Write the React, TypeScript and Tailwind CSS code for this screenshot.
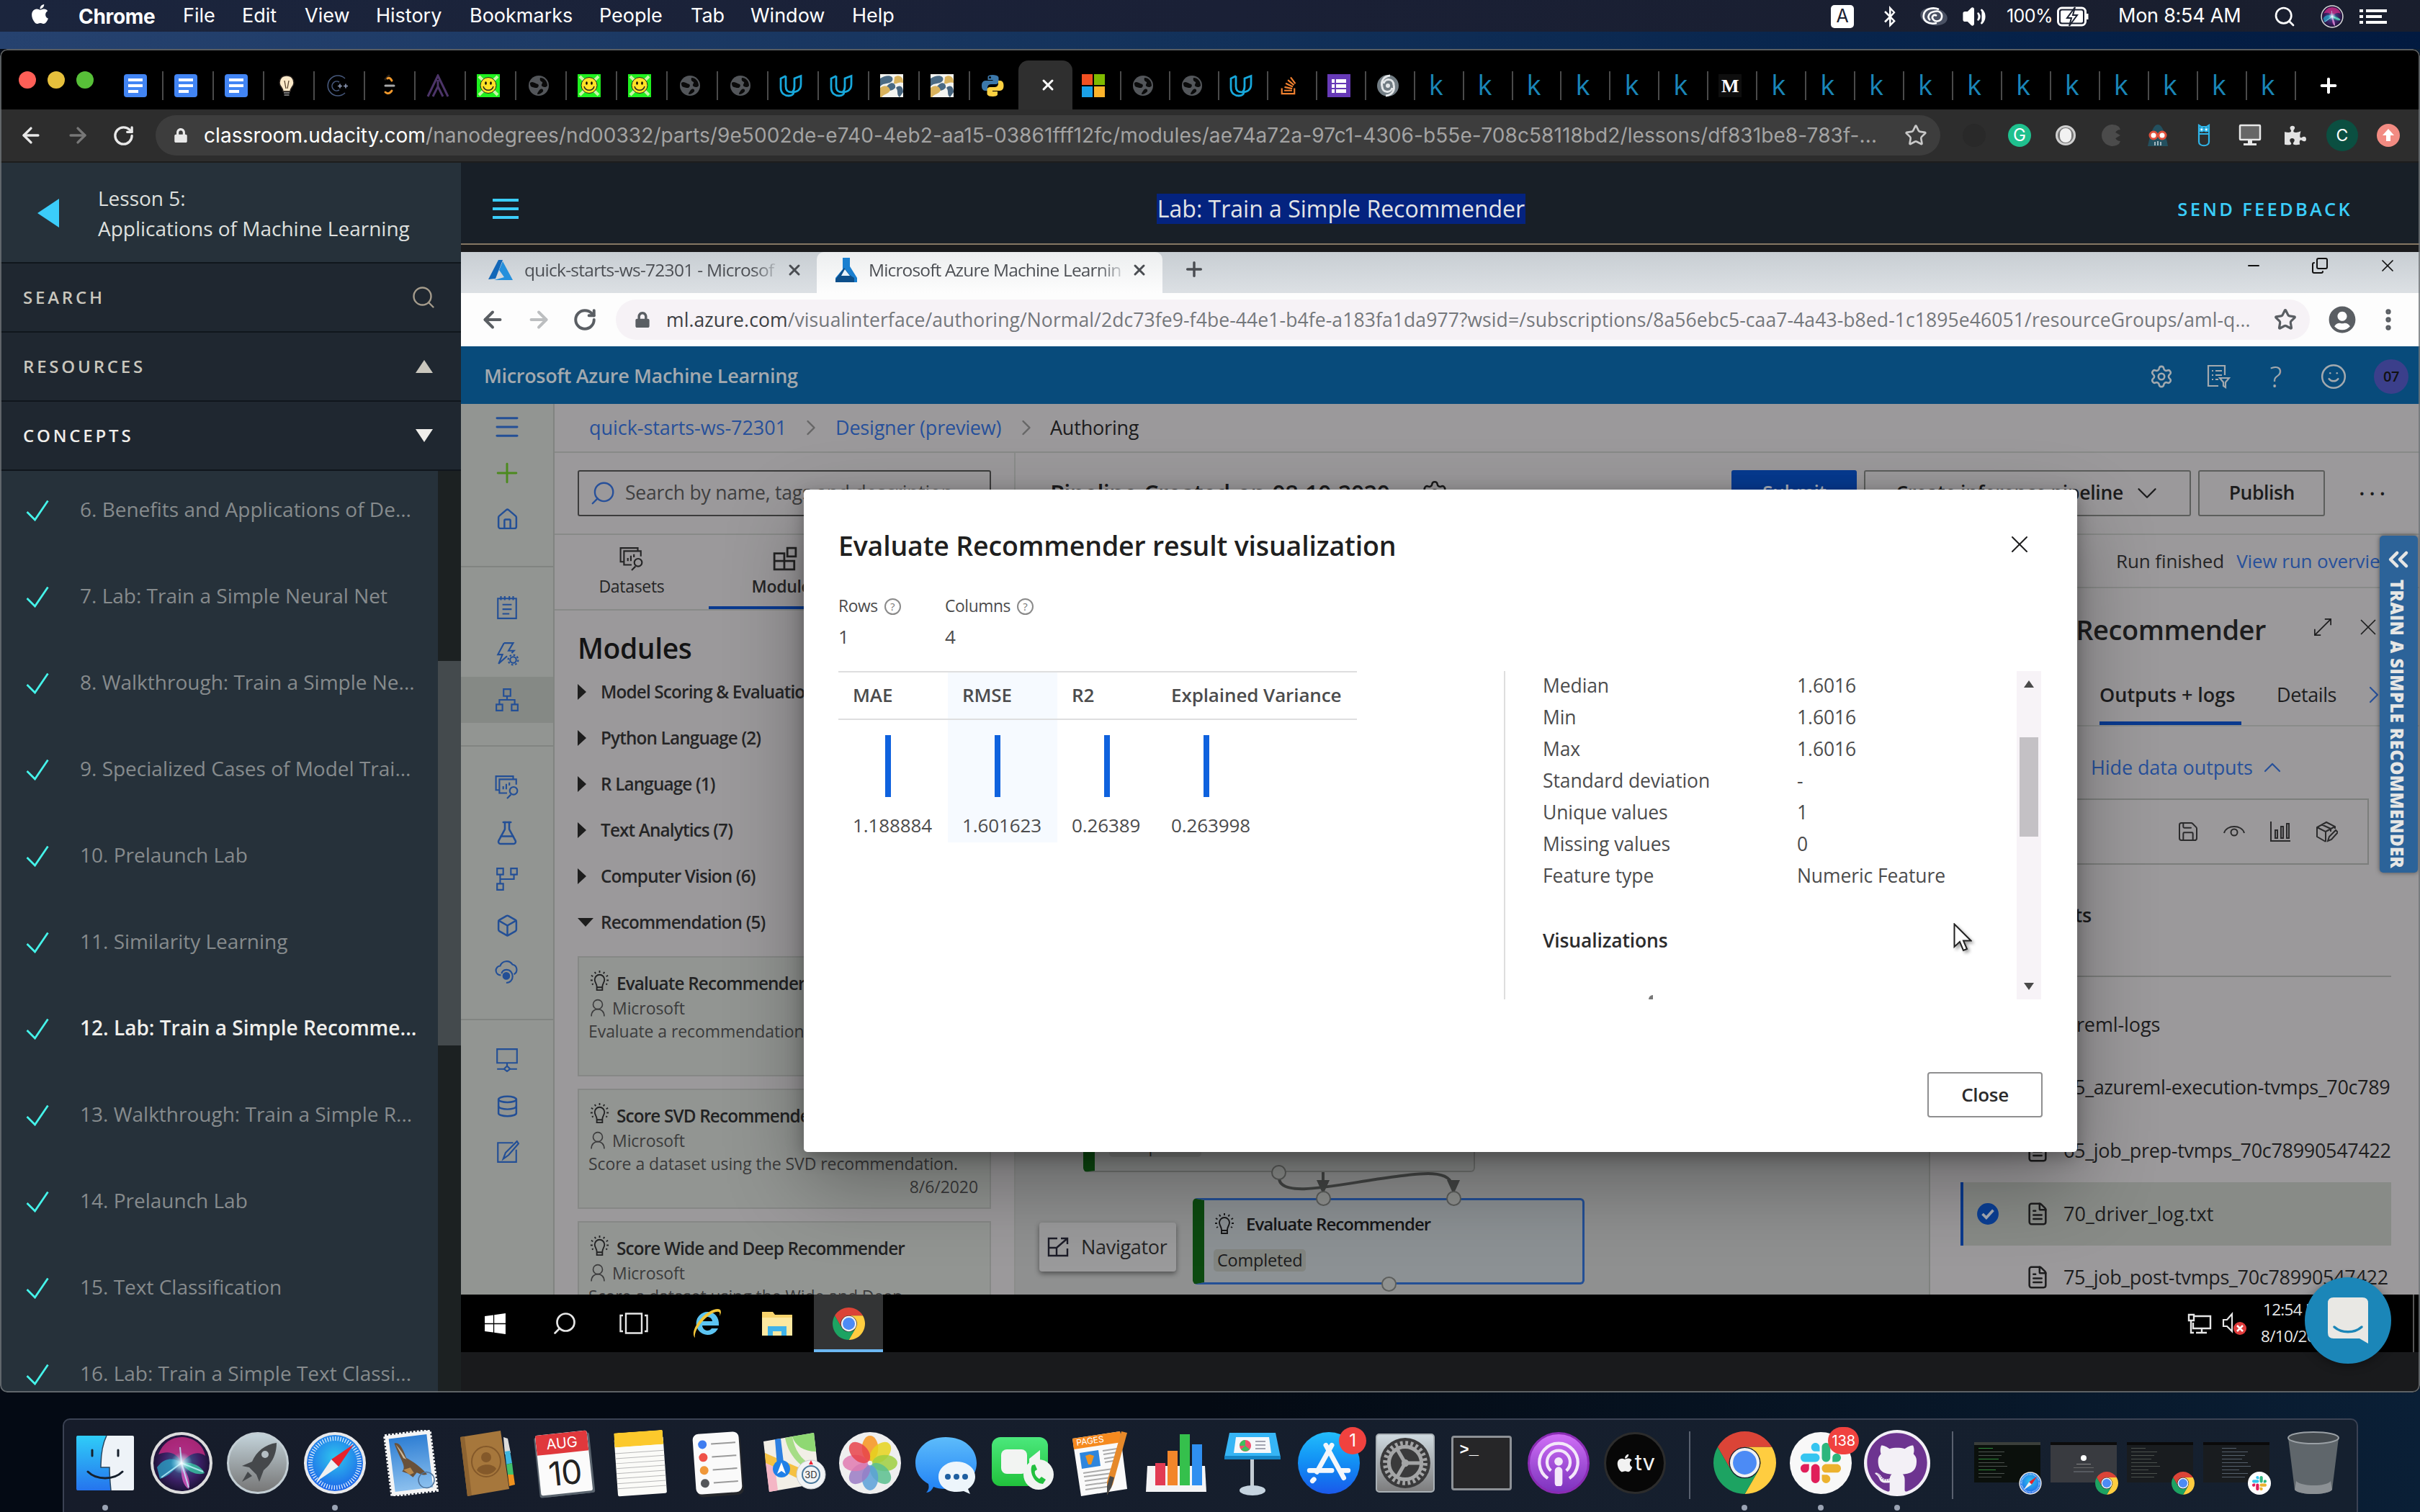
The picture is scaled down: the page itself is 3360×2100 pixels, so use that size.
import React from "react";
import { FaApple, FaBluetoothB, FaGithub, FaStackOverflow, FaLock, FaUserCircle, FaPuzzlePiece, FaWindows } from "react-icons/fa";
import {
  ArrowLeft, ArrowRight, RotateCw, Star, X, Plus, Search, Home, FlaskConical, Box, Database, Menu, ChevronRight, ChevronDown, ChevronUp,
  Settings, Smile, FileText, Save, ChevronsLeft, Copy, Volume2, MoreVertical, Minus,
} from "lucide-react";

type P = { className?: string };

/* ---------- brand marks ---------- */
const Chrome = ({ className = "" }: P) => (
  <svg viewBox="2 2 44 44" className={className}>
    <path fill="#DB4437" d="M24 13H43.05A22 22 0 0 0 4.95 13L14.47 29.5A11 11 0 0 1 24 13Z" />
    <path fill="#FFCD40" d="M43.05 13A22 22 0 0 1 24 46L33.53 29.5A11 11 0 0 0 24 13Z" />
    <path fill="#1DA362" d="M24 46A22 22 0 0 1 4.95 13L14.47 29.5A11 11 0 0 0 33.53 29.5Z" />
    <circle cx="24" cy="24" r="10.4" fill="#f1f1f1" />
    <circle cx="24" cy="24" r="8.3" fill="#4c8bf5" />
  </svg>
);
const SlackMark = ({ className = "" }: P) => (
  <svg viewBox="0 0 122.8 122.8" className={className}>
    <path fill="#E01E5A" d="M25.8 77.6c0 7.1-5.8 12.9-12.9 12.9S0 84.7 0 77.6s5.8-12.9 12.9-12.9h12.9v12.9zm6.5 0c0-7.1 5.8-12.9 12.9-12.9s12.9 5.8 12.9 12.9v32.3c0 7.1-5.8 12.9-12.9 12.9s-12.9-5.8-12.9-12.9V77.6z" />
    <path fill="#36C5F0" d="M45.2 25.8c-7.1 0-12.9-5.8-12.9-12.9S38.1 0 45.2 0s12.9 5.8 12.9 12.9v12.9H45.2zm0 6.5c7.1 0 12.9 5.8 12.9 12.9s-5.8 12.9-12.9 12.9H12.9C5.8 58.1 0 52.3 0 45.2s5.8-12.9 12.9-12.9h32.3z" />
    <path fill="#2EB67D" d="M97 45.2c0-7.1 5.8-12.9 12.9-12.9s12.9 5.8 12.9 12.9-5.8 12.9-12.9 12.9H97V45.2zm-6.5 0c0 7.1-5.8 12.9-12.9 12.9s-12.9-5.8-12.9-12.9V12.9C64.7 5.8 70.5 0 77.6 0s12.9 5.8 12.9 12.9v32.3z" />
    <path fill="#ECB22E" d="M77.6 97c7.1 0 12.9 5.8 12.9 12.9s-5.8 12.9-12.9 12.9-12.9-5.8-12.9-12.9V97h12.9zm0-6.5c-7.1 0-12.9-5.8-12.9-12.9s5.8-12.9 12.9-12.9h32.3c7.1 0 12.9 5.8 12.9 12.9s-5.8 12.9-12.9 12.9H77.6z" />
  </svg>
);
const Safari = ({ className = "" }: P) => (
  <svg viewBox="0 0 88 88" className={className}>
    <defs>
      <radialGradient id="saf" cx=".5" cy=".4" r=".6"><stop offset="0" stopColor="#2fc6ee" /><stop offset="1" stopColor="#1c63e8" /></radialGradient>
    </defs>
    <circle cx="44" cy="44" r="43" fill="#e9e9ea" />
    <circle cx="44" cy="44" r="39" fill="url(#saf)" />
    <circle cx="44" cy="44" r="34" fill="none" stroke="#fff" strokeWidth="6" strokeDasharray="1.2 2.36" opacity=".9" />
    <path d="M70 18L49 49L39 39Z" fill="#e8222b" />
    <path d="M18 70L39 39L49 49Z" fill="#f0f0f0" />
  </svg>
);
const Siri = ({ className = "" }: P) => (
  <svg viewBox="0 0 88 88" className={className}>
    <defs>
      <radialGradient id="sir" cx=".5" cy=".5" r=".55"><stop offset="0" stopColor="#3d6f9d" /><stop offset=".6" stopColor="#3a1f63" /><stop offset="1" stopColor="#15102c" /></radialGradient>
      <radialGradient id="sirg" cx=".5" cy=".5" r=".5"><stop offset="0" stopColor="#fff" /><stop offset="1" stopColor="#8fe8ff" stopOpacity="0" /></radialGradient>
    </defs>
    <circle cx="44" cy="44" r="43" fill="#dcdcdc" />
    <circle cx="44" cy="44" r="39" fill="url(#sir)" />
    <path d="M44 8C60 8 74 18 77 34C66 26 54 32 44 44C38 30 26 26 12 32C18 16 30 8 44 8Z" fill="#d22c86" opacity=".75" />
    <path d="M10 50C20 36 34 36 44 44C34 52 28 62 14 66Z" fill="#2aa6c8" opacity=".75" />
    <path d="M44 44C58 42 72 48 76 58C66 62 52 56 44 44Z" fill="#38c9a2" opacity=".8" />
    <path d="M44 44C50 56 58 68 54 80C46 76 42 60 44 44Z" fill="#e05ac0" opacity=".8" />
    <path d="M44 44L16 64M44 44L42 22M44 44L54 78M44 44L74 56" stroke="#bff3ff" strokeWidth="2" opacity=".8" />
    <circle cx="44" cy="44" r="15" fill="url(#sirg)" />
  </svg>
);
const Udacity = () => (
  <svg viewBox="0 0 32 32" className="size-8" fill="none" stroke="#17a8dc" strokeWidth="2.8">
    <path d="M9 2.5L2 6V19C2 27 8 30 13 30C17 30 20 28 20 25" />
    <path d="M9 2.5V17C9 24 13 25 17 25C24 25 30 22 30 14V2.5L21 6V17C21 20 20 23 18 25" />
  </svg>
);
const Globe = () => (
  <svg viewBox="0 0 32 32" className="size-8">
    <circle cx="16" cy="16" r="14" fill="#53565a" />
    <path d="M4 12C8 9 11 13 15 14C17 16 15 18 14 19C12 19 10 19 7 18C4 17 4 14 4 12ZM18 5C25 5 28 11 28 16C26 19 23 18 21 17C18 15 22 13 21 11C18 10 17 8 18 5ZM17 22C20 19 23 21 22 24C20 26 18 28 14 28C14 25 16 24 17 22Z" fill="#0a0a0a" />
  </svg>
);
const Docs = () => (
  <span className="flex size-8 flex-col items-start justify-center gap-1 rounded-[4px] bg-[#4285f4] pl-1.5">
    <i className="h-1 w-5 bg-white" /><i className="h-1 w-5 bg-white" /><i className="h-1 w-3.5 bg-white" />
  </span>
);
const Smiley = () => (
  <svg viewBox="0 0 32 32" className="size-8">
    <rect width="32" height="32" fill="#1ff01f" />
    <path d="M3 3L29 29M29 3L3 29" stroke="#c9f7a8" strokeWidth="4" />
    <circle cx="16" cy="15.5" r="11" fill="#ffe227" stroke="#222" strokeWidth="1" />
    <ellipse cx="12.5" cy="12.5" rx="1.3" ry="2.3" /><ellipse cx="19.5" cy="12.5" rx="1.3" ry="2.3" />
    <path d="M9 17C11 24 21 24 23 17" fill="none" stroke="#222" strokeWidth="1.5" />
  </svg>
);
const Snakes = () => (
  <svg viewBox="0 0 32 32" className="size-8">
    <rect width="32" height="32" fill="#f4f4f0" />
    <path d="M0 6C8 0 20 1 17 9C13 15 5 11 0 17ZM12 14C18 10 22 14 21 19C17 24 10 22 6 27C4 20 8 18 12 14Z" fill="#4a6a84" /><path d="M20 4C26 0 32 3 32 12C26 10 24 14 19 13Z" fill="#d9b25c" />
    <path d="M0 19C6 14 12 16 14 22C12 28 5 27 2 32H0Z" fill="#d9b25c" /><path d="M22 19C27 14 32 17 32 25L27 32C22 28 26 24 22 19Z" fill="#46647e" />
  </svg>
);
const Bulb = () => (
  <svg viewBox="0 0 32 32" className="size-8">
    <path d="M16 2C9 2 6 7 6 12C6 17 11 19 11 24H21C21 19 26 17 26 12C26 7 23 2 16 2Z" fill="#fbe9c8" stroke="#2a2320" strokeWidth="1.5" />
    <path d="M13 9L15 20M19 9L17 20" stroke="#58432e" strokeWidth="1.3" fill="none" /><path d="M12 26H20M12.5 29H19.5" stroke="#777" strokeWidth="2" />
  </svg>
);
const Cpp = () => (
  <svg viewBox="0 0 32 32" className="size-8" fill="none" stroke="#46587c" strokeWidth="1.6">
    <path d="M27 6A14 14 0 1 0 27 26" /><path d="M19 11A6.5 6.5 0 1 0 19 22" /><path d="M17 16.5H23M20 13.5V19.5M25 16.5H31M28 13.5V19.5" stroke="#8c98b4" />
  </svg>
);
const Leet = () => (
  <svg viewBox="0 0 32 32" className="size-8" fill="none" strokeLinecap="round" strokeWidth="3">
    <path d="M18 2L13 7" stroke="#2d2318" /><path d="M16 6C19 4 21 7 22 9M22 23C19 28 15 27 13 25" stroke="#f0982c" /><path d="M13 16H25" stroke="#a8a8a8" />
  </svg>
);
const Arc = () => (
  <svg viewBox="0 0 32 32" className="size-8" fill="none" stroke="#4c3468" strokeWidth="3"><path d="M2 31L16 2L30 31M9 31L16 17L23 31M16 8V18" /></svg>
);
const PyColor = () => (
  <svg viewBox="0 0 32 32" className="size-8">
    <path fill="#3c78aa" d="M16 1C9 1 9.5 4 9.5 4V8H16.5V9H6.5S1 8.5 1 16S6 23 6 23H9V19S9 14 14 14H20.5S24.5 14 24.5 10V5S25 1 16 1ZM12.5 3A1.5 1.5 0 1 1 12.5 6A1.5 1.5 0 0 1 12.5 3Z" />
    <path fill="#fdd141" d="M16.5 31C23.5 31 23 28 23 28V24H16V23H26S31.5 23.5 31.5 16S26.5 9 26.5 9H24V13S24 18 19 18H12.5S8.5 18 8.5 22V27S8 31 16.5 31Z" />
  </svg>
);
const MsLogo = () => (
  <span className="grid size-8 grid-cols-2 gap-0.5"><i className="bg-[#f25022]" /><i className="bg-[#7fba00]" /><i className="bg-[#1ba1e8]" /><i className="bg-[#fcb42b]" /></span>
);
const Swirl = () => (
  <svg viewBox="0 0 32 32" className="size-8"><circle cx="16" cy="16" r="15" fill="#727d84" /><path d="M19 2C10 3 6 10 8 17M13 30C22 29 26 22 24 15M8 17C8 26 20 27 22 19M24 15C24 6 12 5 10 13" fill="none" stroke="#e4e7e9" strokeWidth="3" /><circle cx="16" cy="16" r="3" fill="#e4e7e9" /></svg>
);
const ListFav = () => (
  <span className="flex size-8 flex-col justify-center gap-0.5 bg-[#673ab7] pl-1.5">
    {[0, 1, 2].map((i) => <span key={i} className="flex gap-0.5"><i className="h-[5px] w-1 bg-white" /><i className="h-[5px] w-3.5 bg-white" /></span>)}
  </span>
);
const Kaggle = () => <span className="-ml-px w-8 pb-1 text-center font-['Open_Sans'] text-[38px] leading-8 text-[#1a86b8]">k</span>;
const Medium = () => <span className="flex size-8 items-center justify-center bg-[#0e0e0e] font-['Liberation_Serif'] text-[26px] font-bold text-white">M</span>;

/* ---------- studio line icons ---------- */
const Line = ({ className = "size-[34px]", d, w = 2, children }: P & { d: string; w?: number; children?: React.ReactNode }) => (
  <svg viewBox="0 0 32 32" className={`shrink-0 ${className}`} fill="none" stroke="currentColor" strokeWidth={w}><path d={d} />{children}</svg>
);
const DatasetIcon = ({ className }: P) => <Line className={className} d="M5 20H1.500V2H24V6M16 24H6V6H28V13M11 19V15M15 19V12M19 14V10M21 26L16 31"><circle cx="24.5" cy="21" r="5" /></Line>;
const NoteIcon = () => <Line d="M4 4H28V30H4ZM10 12H22M10 18H22M10 24H19M8 1V6M13 1V6M19 1V6M24 1V6" />;
const BoltIcon = () => (
  <Line d="M12 2H24L18 12H25L22 15M16 19L5 29L10 17H4L12 2"><circle cx="24" cy="24" r="4" /><circle cx="24" cy="24" r="6.5" strokeDasharray="2.5 2.6" /></Line>
);
const TreeIcon = () => <Line d="M11.500 2H20.500V11H11.500ZM2 22H10V30H2ZM22 22H30V30H22ZM16 11V16M6 22V16H26V22" />;
const BranchIcon = () => <Line d="M3 2H11V10H3ZM21 2H29V10H21ZM3 22H11V30H3ZM7 10V22M7 16H25V10" />;
const CloudIcon = () => <Line d="M8 21A6 6 0 0 1 7 9A9 9 0 0 1 23 7A7 7 0 0 1 25 20M15 31C26 31 26 14 15 14C11 14 9 17 9 19"><circle cx="15" cy="22" r="4" fill="currentColor" /></Line>;
const PcIcon = () => <Line d="M3 2H29V20H3ZM16 20V25M3 28H12M20 28H29M12 28L16 24L20 28L16 31Z" />;
const PenIcon = () => <Line d="M24 4H4V29H28V13M29 2L14 17L11 25L18 20L31 5Z" />;
const BulbIcon = ({ className }: P) => <Line className={className} w={1.9} d="M12 24C12 20 9 18 9 14A7 7 0 0 1 23 14C23 18 20 20 20 24V29H12ZM12 25H20M16 1V4M9 3L10.500 5.500M23 3L21.500 5.500M4 8L6.500 9.500M28 8L25.500 9.500M3 15H6M29 15H26M5 21L7 20M27 21L25 20" />;
const PersonIcon = ({ className }: P) => <Line className={className} d="M5 30C5 22 10 18 16 18S27 22 27 30"><circle cx="16" cy="10" r="8" /></Line>;

/* ---------- menu bar ---------- */
const menus: [string, string][] = [
  ["File", "w-[82px]"], ["Edit", "w-[87px]"], ["View", "w-[99px]"], ["History", "w-[130px]"], ["Bookmarks", "w-[180px]"],
  ["People", "w-[127px]"], ["Tab", "w-[83px]"], ["Window", "w-[141px]"], ["Help", "w-[80px]"],
];
const MenuBar = () => (
  <div className="flex h-11 shrink-0 items-center bg-gradient-to-r from-[#1b253d] via-[#1a2036] to-[#191e2d] pt-px text-[27px] text-white">
    <FaApple className="-mt-1.5 ml-[40px] size-[31px]" />
    <b className="ml-[38px] w-[145px] text-[28px] font-bold tracking-[-0.3px]">Chrome</b>
    {menus.map(([m, w]) => <span key={m} className={w}>{m}</span>)}
    <span className="ml-auto flex size-8 items-center justify-center rounded-[5px] bg-white text-[25px] text-[#1a2030]">A</span>
    <FaBluetoothB className="ml-[35px] size-[30px]" />
    <svg viewBox="0 0 40 34" className="ml-[26px] h-[34px] w-10" fill="none">
      <ellipse cx="20" cy="17" rx="19" ry="12" fill="#4a5163" transform="rotate(12 20 17)" />
      <path d="M21 10C27 8 32 12 31 18C30 24 22 25 19 21C16 17 20 13 24 16" stroke="#fff" strokeWidth="2.6" /><path d="M24 26C12 29 4 22 6 14C8 5 20 4 27 7" stroke="#fff" strokeWidth="2.6" /><path d="M15 22C10 18 13 11 21 10" stroke="#fff" strokeWidth="2.6" />
    </svg>
    <Volume2 className="ml-[19px] size-[34px] fill-white" />
    <span className="ml-[28px] w-[70px] text-[25px] tracking-[-0.6px]">100%</span>
    <svg viewBox="0 0 46 28" className="h-7 w-[46px]"><rect x="1.5" y="2" width="38" height="24" rx="5" fill="none" stroke="#fff" strokeWidth="3" /><rect x="5" y="5.5" width="31" height="17" rx="2" fill="#fff" /><path d="M25 1L14 16H20L17 27L28 12H22Z" fill="#fff" stroke="#1a2030" strokeWidth="2" /><path d="M42 10V18" stroke="#fff" strokeWidth="3" /></svg>
    <span className="ml-[39px] w-[215px] tracking-[-0.25px]">Mon 8:54 AM</span>
    <Search className="size-[32px]" />
    <Siri className="ml-[34px] size-8" />
    <svg viewBox="0 0 38 24" className="mr-[46px] ml-[22px] h-6 w-[38px]" stroke="#fff" strokeWidth="4"><path d="M0 4H5M9 4H38M0 12H5M9 12H31M0 20H5M9 20H38" /></svg>
  </div>
);

/* ---------- chrome window ---------- */
const leftTabs = [Docs, Docs, Docs, Bulb, Cpp, Leet, Arc, Smiley, Globe, Smiley, Smiley, Globe, Globe, Udacity, Udacity, Snakes, Snakes];
const rightTabs = [Globe, Globe, Udacity, () => <FaStackOverflow className="size-7 text-[#f08030]" />, ListFav, Swirl, Kaggle, Kaggle, Kaggle, Kaggle, Kaggle, Kaggle, Medium,
  Kaggle, Kaggle, Kaggle, Kaggle, Kaggle, Kaggle, Kaggle, Kaggle, Kaggle, Kaggle, Kaggle];

const TabStrip = () => (
  <div className="flex h-[84px] shrink-0 items-start bg-black pt-[16px]">
    <div className="ml-[26px] flex w-[131px] items-center gap-[16px] pt-[15px]">
      <i className="size-6 rounded-full bg-[#ff5f57]" /><i className="size-6 rounded-full bg-[#e6c03c]" /><i className="size-6 rounded-full bg-[#57c038]" />
    </div>
    {leftTabs.map((I, i) => (
      <div key={i} className="mt-[15px] flex h-10 w-[70px] items-center border-r-2 border-[#4a4a4a] pl-[15px]"><I /></div>
    ))}
    <div className="mt-[15px] flex h-10 w-[67px] items-center pl-[15px]"><PyColor /></div>
    <div className="flex h-[68px] w-[75px] items-center justify-center rounded-t-[14px] bg-[#2f2f2f] pl-1.5"><X className="size-6 text-white" strokeWidth={3} /></div>
    <div className="mt-[15px] flex h-10 w-[68px] items-center border-r-2 border-[#4a4a4a] pl-[13px]"><MsLogo /></div>
    {rightTabs.map((I, i) => (
      <div key={i} className="mt-[15px] flex h-10 w-[67.94px] items-center border-r-2 border-[#4a4a4a] pl-[14px]"><I /></div>
    ))}
    <Plus className="mt-[19px] ml-[29px] size-[32px] text-white" strokeWidth={3} />
  </div>
);

const Toolbar = () => (
  <div className="flex h-[74px] shrink-0 items-center border-b-2 border-[#1d1d1d] bg-[#2d2d2d]">
    <ArrowLeft className="ml-[26px] size-[34px] text-[#e8e8e8]" strokeWidth={2.4} />
    <ArrowRight className="ml-[31px] size-[34px] text-[#777]" strokeWidth={2.4} />
    <RotateCw className="ml-[31px] size-[31px] text-[#e8e8e8]" strokeWidth={2.6} />
    <div className="ml-[29px] flex h-14 w-[2478px] items-center rounded-full bg-[#3d3d3d]">
      <FaLock className="ml-[25px] size-[20px] text-[#e8e8e8]" />
      <div className="ml-[22px] w-[2350px] whitespace-nowrap text-[28px] tracking-[0.09px] text-[#a3a3a3]">
        <span className="text-white">classroom.udacity.com</span>/nanodegrees/nd00332/parts/9e5002de-e740-4eb2-aa15-03861fff12fc/modules/ae74a72a-97c1-4306-b55e-708c58118bd2/lessons/df831be8-783f-...
      </div>
      <Star className="ml-[11px] size-[32px] shrink-0 text-[#c8c8c8]" />
    </div>
    <i className="ml-[31px] size-8 rounded-full bg-[#292929]" />
    <span className="ml-[31px] flex size-8 items-center justify-center rounded-full bg-[#1fc08e] text-[24px] text-white">G</span>
    <span className="ml-8 flex size-8 items-center justify-center"><span className="flex size-7 items-center justify-center rounded-full border-[3px] border-[#cfcfcf] bg-[#777]"><i className="h-5 w-4 rounded-full bg-[#f2f2f2]" /></span></span>
    <svg viewBox="0 0 32 32" className="ml-8 size-8"><path d="M26 4A15 15 0 1 0 26 28L28 24A8 8 0 1 1 28 8Z" fill="#4b4b4b" /><path d="M18 10L28 16L18 22Z" fill="#4b4b4b" /></svg>
    <svg viewBox="0 0 32 32" className="ml-8 size-8"><path d="M2 31C6 12 10 1 16 1S27 14 30 31Z" fill="#23505f" /><circle cx="10" cy="16" r="5" fill="#fff" stroke="#e0503c" strokeWidth="3" /><circle cx="22" cy="16" r="5" fill="#fff" stroke="#e0503c" strokeWidth="3" /><path d="M12 25V30M16 24V30M20 25V30" stroke="#cfd8dc" strokeWidth="1.5" /></svg>
    <svg viewBox="0 0 32 32" className="ml-8 size-8" fill="none" stroke="#2fb4e8" strokeWidth="2.2"><path d="M9 2V25C9 32 23 32 23 25V2L20 4H12ZM9 14H23" /><circle cx="12.8" cy="8" r="2.5" fill="#fff" /><circle cx="19.2" cy="8" r="2.5" fill="#fff" /></svg>
    <svg viewBox="0 0 32 32" className="ml-8 size-8"><rect x="2" y="2" width="28" height="20" rx="1" fill="#666" stroke="#e8e8e8" strokeWidth="2.5" /><path d="M13 23H19V27H25V30H7V27H13Z" fill="#e8e8e8" /></svg>
    <FaPuzzlePiece className="ml-8 size-[30px] text-[#e2e2e2]" />
    <span className="ml-[28px] flex size-11 items-center justify-center rounded-full bg-[#0b4f41] text-[23px] text-white">C</span>
    <span className="ml-[26px] flex size-8 items-center justify-center rounded-full bg-[#f28b82]">
      <svg viewBox="0 0 20 20" className="size-5"><path d="M10 1L18 10H13V18H7V10H2Z" fill="#fff" /></svg>
    </span>
  </div>
);

/* ---------- course sidebar ---------- */
const lessons = [
  "6. Benefits and Applications of De...", "7. Lab: Train a Simple Neural Net", "8. Walkthrough: Train a Simple Ne...", "9. Specialized Cases of Model Trai...",
  "10. Prelaunch Lab", "11. Similarity Learning", "12. Lab: Train a Simple Recomme...", "13. Walkthrough: Train a Simple R...", "14. Prelaunch Lab",
  "15. Text Classification", "16. Lab: Train a Simple Text Classi...",
];
const Section = ({ label, tone, children }: { label: string; tone: string; children: React.ReactNode }) => (
  <div className={`flex h-24 shrink-0 items-center justify-between border-b-2 border-[#10161c] bg-[#1f2730] pr-[37px] pl-8 text-[24px] font-semibold tracking-[3.8px] ${tone}`}>
    <span>{label}</span>{children}
  </div>
);
const Sidebar = () => (
  <div className="flex h-[1708px] w-[640px] shrink-0 flex-col overflow-hidden bg-[#26313a] font-['Open_Sans']">
    <div className="flex h-[140px] shrink-0 items-center border-b-2 border-[#10161c] pt-px">
      <svg viewBox="0 0 30 40" className="ml-[52px] h-10 w-[30px]"><path d="M30 0V40L0 20Z" fill="#3bcdfa" /></svg>
      <div className="ml-[54px] text-[28px] leading-[42px] text-[#dfe0df]">Lesson 5:<br />Applications of Machine Learning</div>
    </div>
    <Section label="SEARCH" tone="text-[#c9c6bd]"><Search className="-mr-[3px] size-[36px] text-[#a59c8c]" strokeWidth={1.6} /></Section>
    <Section label="RESOURCES" tone="text-[#c9c6bd]"><svg viewBox="0 0 24 18" className="mr-0.5 h-[18px] w-6"><path d="M12 0L24 18H0Z" fill="#c9c6bd" /></svg></Section>
    <Section label="CONCEPTS" tone="text-[#efeeea]"><svg viewBox="0 0 24 18" className="mr-0.5 h-[18px] w-6"><path d="M0 0H24L12 18Z" fill="#efeeea" /></svg></Section>
    <div className="flex min-h-0 flex-1">
      <div className="w-[608px] overflow-hidden">
        {lessons.map((l) => (
          <div key={l} className={`flex h-[120px] items-start pt-[34px] pl-[36px] text-[28px] leading-[38px] ${l.startsWith("12.") ? "font-semibold text-[#efefec]" : "text-[#868b8d]"}`}>
            <svg viewBox="0 0 32 30" className="mt-[6px] mr-[43px] h-[30px] w-8 shrink-0" fill="none" stroke="#45f3ea" strokeWidth="2.8"><path d="M1.5 17L12.5 28L30.5 1.5" /></svg>
            <span className="whitespace-nowrap">{l}</span>
          </div>
        ))}
      </div>
      <div className="w-8 bg-[#1c2122] pt-[264px]"><div className="h-[534px] bg-[#444a4d]" /></div>
    </div>
  </div>
);

/* ---------- remote desktop: browser ---------- */
const RemoteTabs = () => (
  <div className="flex h-[57px] shrink-0 bg-gradient-to-b from-[#c8ced3] to-[#dce0e4] text-[#4a4d52]">
    <div className="flex w-[494px] items-center rounded-br-[12px] pb-[7px]">
      <svg viewBox="0 0 34 28" className="ml-[38px] h-7 w-[34px]"><path d="M14 0H20L10 26L0 27Z" fill="#1267b8" /><path d="M20 2L34 28H8L22 24L15 14Z" fill="#2590dc" /></svg>
      <span className="ml-[16px] w-[352px] bg-gradient-to-r from-[#4a4d52] from-90% to-[#bfc4c9] bg-clip-text whitespace-nowrap text-[24.5px] tracking-[-0.72px] text-transparent">quick-starts-ws-72301 - Microsof</span>
      <X className="ml-[11px] size-[24px]" strokeWidth={3} />
    </div>
    <div className="flex w-[480px] items-center rounded-t-[10px] bg-gradient-to-b from-[#eceeef] to-[#fdfdfd] pb-[7px]">
      <svg viewBox="0 0 30 34" className="ml-[26px] h-[34px] w-[30px]"><path d="M10 0H20V12L30 28V34H0V28L10 16Z" fill="#1a7fd0" /><path d="M12 14L20 24L26 28V34H0V30Z" fill="#0d4f8a" /><path d="M13 16L20 25H8Z" fill="#e8f3fb" /></svg>
      <span className="ml-[16px] w-[352px] bg-gradient-to-r from-[#4a4d52] from-90% to-[#cfd2d5] bg-clip-text whitespace-nowrap text-[24.5px] tracking-[-0.85px] text-transparent">Microsoft Azure Machine Learnin</span>
      <X className="ml-[12px] size-[24px]" strokeWidth={3} />
    </div>
    <Plus className="mt-[8px] ml-[28px] size-[32px]" strokeWidth={2.6} />
    <div className="ml-auto flex gap-[68px] pt-[7px] pr-[31px] text-[#111]"><Minus className="size-6" /><Copy className="size-6 -scale-y-100" /><X className="-mt-0.5 size-7" strokeWidth={1.5} /></div>
  </div>
);
const RemoteBar = () => (
  <div className="flex h-[74px] shrink-0 items-center bg-[#fdfdfd] text-[#5a5e63]">
    <ArrowLeft className="ml-[26px] size-[36px]" strokeWidth={2.6} />
    <ArrowRight className="ml-[28px] size-[36px] text-[#bcbec0]" strokeWidth={2.6} />
    <RotateCw className="ml-[29px] size-[34px]" strokeWidth={2.8} />
    <div className="ml-[26px] flex h-14 w-[2352px] items-center rounded-full bg-[#f6f2f6]">
      <FaLock className="ml-[26px] size-[22px]" />
      <div className="ml-[22px] w-[2232px] pt-0.5 whitespace-nowrap text-[26.5px] tracking-[0.1px] text-[#74777b]"><span className="text-[#3c4043]">ml.azure.com</span>/visualinterface/authoring/Normal/2dc73fe9-f4be-44e1-b4fe-a183fa1da977?wsid=/subscriptions/8a56ebc5-caa7-4a43-b8ed-1c1895e46051/resourceGroups/aml-q...</div>
      <Star className="size-[32px] shrink-0" strokeWidth={2.4} />
    </div>
    <FaUserCircle className="ml-[26px] size-[38px]" />
    <MoreVertical className="ml-[26px] size-[38px]" strokeWidth={2.6} />
  </div>
);

/* ---------- remote desktop: azure studio ---------- */
const cell = "flex h-[64px] items-center justify-center";
const Rail = () => (
  <div className="w-[130px] shrink-0 border-r-2 border-[#818481] bg-[#929592] text-[#234f96]">
    <div className={cell}><Menu className="size-[42px]" strokeWidth={1.7} /></div>
    <div className={`${cell} text-[#4c8a1e]`}><Plus className="size-[44px]" strokeWidth={1.6} /></div>
    <div className={cell}><Home className="size-[33px]" strokeWidth={1.8} /></div>
    <div className="mt-[33px] border-t-2 border-[#818481] pt-[24px]">
      <div className={cell}><NoteIcon /></div>
      <div className={cell}><BoltIcon /></div>
      <div className={`${cell} bg-[#858985]`}><TreeIcon /></div>
    </div>
    <div className="mt-[31px] border-t-2 border-[#818481] pt-[24px]">
      <div className={cell}><DatasetIcon className="size-[34px]" /></div>
      <div className={cell}><FlaskConical className="size-[36px]" strokeWidth={1.7} /></div>
      <div className={cell}><BranchIcon /></div>
      <div className={cell}><Box className="size-[33px]" strokeWidth={1.8} /></div>
      <div className={cell}><CloudIcon /></div>
    </div>
    <div className="mt-[34px] border-t-2 border-[#818481] pt-[23px]">
      <div className={cell}><PcIcon /></div>
      <div className={cell}><Database className="size-[33px]" strokeWidth={1.8} /></div>
      <div className={cell}><PenIcon /></div>
    </div>
  </div>
);
const moduleGroups = ["Model Scoring & Evaluation (6)", "Python Language (2)", "R Language (1)", "Text Analytics (7)", "Computer Vision (6)", "Recommendation (5)"];
const cards = [
  { t: "Evaluate Recommender", d: "Evaluate a recommendation model.", date: "8/6/2020" },
  { t: "Score SVD Recommender", d: "Score a dataset using the SVD recommendation.", date: "8/6/2020" },
  { t: "Score Wide and Deep Recommender", d: "Score a dataset using the Wide and Deep", date: "" },
];
const ModulePanel = () => (
  <div className="flex w-[640px] shrink-0 flex-col overflow-hidden border-r-2 border-[#8a8c8a]">
    <div className="h-[114px] shrink-0 border-b-2 border-[#888a88] pt-[24px] pl-[32px]">
      <div className="flex h-16 w-[574px] items-center rounded-[3px] border-2 border-[#3c3c3c] text-[26.5px] tracking-[-0.2px] text-[#3f3f40]">
        <Search className="ml-[14px] size-[38px] -scale-x-100 text-[#27509a]" strokeWidth={1.5} /><span className="ml-[12px] whitespace-nowrap">Search by name, tags and description</span>
      </div>
    </div>
    <div className="flex h-[105px] shrink-0 border-b-2 border-[#888a88] text-[23px] tracking-[-0.3px] text-[#252526]">
      <div className="flex w-[214px] flex-col items-center pt-[16px]"><DatasetIcon className="size-[34px]" /><span className="mt-1 leading-[34px]">Datasets</span></div>
      <div className="flex w-[212px] flex-col items-center border-b-4 border-[#0a3a8f] pt-[16px] font-semibold">
        <svg viewBox="0 0 32 32" className="size-[34px]" fill="none" stroke="#222" strokeWidth="2.6"><path d="M2 9H15V30H2ZM2 19H28V30H15M19 2H30V13H19Z" /></svg>
        <span className="mt-1 leading-[34px]">Modules</span>
      </div>
    </div>
    <div className="h-[81px] shrink-0 pt-[24px] pl-[32px] text-[39px] leading-[56px] font-semibold tracking-[-0.4px] text-[#141415]">Modules</div>
    {moduleGroups.map((m, i) => (
      <div key={m} className="flex h-16 shrink-0 items-center pl-[32px] text-[24.3px] font-semibold tracking-[-0.85px] text-[#252526]">
        {i < 5 ? <svg viewBox="0 0 12 22" className="mr-[20px] h-[22px] w-3"><path d="M0 0L12 11L0 22Z" fill="#1d1d1d" /></svg> : <svg viewBox="0 0 22 12" className="mr-[10px] h-3 w-[22px]"><path d="M0 0H22L11 12Z" fill="#1d1d1d" /></svg>}
        <span className="whitespace-nowrap">{m}</span>
      </div>
    ))}
    <div className="flex flex-col gap-[17px] pt-[15px] pl-[32px]">
      {cards.map((c) => (
        <div key={c.t} className="h-[167px] w-[574px] shrink-0 border-2 border-[#868886] bg-[#929592] pt-[18px] pl-[13px] text-[23px] leading-[32px] tracking-[-0.06px] text-[#3b3b3c]">
          <div className="flex items-center text-[24.3px] leading-[36px] font-semibold tracking-[-0.85px] whitespace-nowrap text-[#222223]"><BulbIcon className="-mt-2 mr-[8px] size-[31px]" />{c.t}</div>
          <div className="flex items-center"><PersonIcon className="mr-[7px] size-[26px]" />Microsoft</div>
          <div className="whitespace-nowrap">{c.d}</div>
          <div className="pr-[16px] text-right">{c.date}</div>
        </div>
      ))}
    </div>
  </div>
);
const Port = ({ className = "" }: P) => <i className={`absolute size-[21px] rounded-full border-2 border-[#5c5e5c] bg-[#8f918f] ${className}`} />;
const Canvas = () => (
  <div className="relative w-[1270px] shrink-0 overflow-hidden border-r-2 border-[#7f827f] bg-[#8f9090]">
    <div className="absolute top-[691px] left-[94px] h-[120px] w-[544px] rounded-[6px] border-2 border-l-[16px] border-[#727472] border-l-[#0c4a10] bg-[#8b8d8c] pt-[64px] pl-[20px]"><span className="rounded-[5px] bg-[#808280] px-[5px] text-[23px] text-[#2d2d2e]">Completed</span></div>
    <svg viewBox="0 0 1270 980" className="absolute top-0 left-0 h-[980px] w-[1270px]" fill="none" stroke="#434544" strokeWidth="4">
      <path d="M366 820C368 846 440 830 500 821C570 811 604 806 608 834M427 811V836" />
      <path d="M418 822H436L427 842ZM599 822H617L608 842Z" fill="#434544" stroke="none" />
    </svg>
    <div className="absolute top-[847px] left-[246px] h-[120px] w-[544px] rounded-[6px] border-[3px] border-l-[16px] border-[#234f96] border-l-[#0c4a10] bg-[#8c9194]">
      <div className="mt-[15px] flex items-center pl-[12px] text-[24px] leading-[36px] font-semibold tracking-[-0.95px] text-[#161617]"><BulbIcon className="mr-[14px] size-[32px]" />Evaluate Recommender</div>
      <span className="mt-[17px] ml-[13px] inline-block rounded-[5px] bg-[#828581] px-[5px] text-[23.5px] leading-[31px] tracking-[-0.2px] text-[#1c1c1d]">Completed</span>
    </div>
    <Port className="top-[801px] left-[355px]" /><Port className="top-[837px] left-[417px]" /><Port className="top-[837px] left-[598px]" /><Port className="top-[956px] left-[508px]" />
    <div className="absolute top-[881px] left-[33px] flex h-[68px] w-[190px] items-center rounded-[4px] bg-[#9a9a9b] text-[27px] tracking-[-0.3px] text-[#252526] shadow-[0_3px_7px_rgba(0,0,0,0.45)]">
      <svg viewBox="0 0 30 28" className="mr-[17px] ml-[11px] h-7 w-[30px]" fill="none" stroke="#1c1c28" strokeWidth="2.4"><path d="M14 2H2V26H28V16M2 15H13V26M13 15L28 2M19 2H28V10" /></svg>Navigator
    </div>
  </div>
);
const files = ["55_azureml-execution-tvmps_70c789", "65_job_prep-tvmps_70c78990547422", "70_driver_log.txt", "75_job_post-tvmps_70c78990547422"];
const RightPanel = () => (
  <div className="flex-1 overflow-hidden text-[27px] tracking-[-0.1px] text-[#1d1d1e]">
    <div className="flex h-[114px] items-center justify-end text-[38px] font-semibold tracking-[-0.45px] whitespace-nowrap">Evaluate Recommender
      <svg viewBox="0 0 28 28" className="mt-[-6px] ml-[66px] size-[26px] shrink-0" fill="none" stroke="currentColor" strokeWidth="1.8"><path d="M2 26L26 2M17 2H26V11M2 17V26H11" /></svg><X className="mt-[-6px] mr-[53px] ml-[31px] size-[38px] shrink-0" strokeWidth={1.1} />
    </div>
    <div className="flex h-[78px] items-end border-b-2 border-[#8a8c8a] pl-[235px]">
      <div className="h-[62px] w-[197px] border-b-[5px] border-[#0a3a8f] text-[27px] font-semibold tracking-[0px] whitespace-nowrap">Outputs + logs</div>
      <div className="ml-[49px] h-[62px] tracking-[-0.4px]">Details</div><ChevronRight className="mb-[22px] ml-[32px] size-[40px] text-[#27509a]" strokeWidth={1.3} />
    </div>
    <div className="flex h-[100px] items-center pt-[14px] pl-[223px] text-[#27509a]">Hide data outputs<ChevronUp className="ml-[7px] size-[40px]" strokeWidth={1.3} /></div>
    <div className="ml-[40px] flex h-[92px] w-[569px] items-center justify-end gap-[32px] border-2 border-[#7c7e7c] pr-[41px] text-[#2b2b2c]">
      <Save className="size-[32px]" strokeWidth={1.5} />
      <svg viewBox="0 0 32 32" className="size-[32px]" fill="none" stroke="currentColor" strokeWidth="2"><path d="M2 18C5 6 27 6 30 18" /><circle cx="16" cy="17" r="4.5" /></svg>
      <svg viewBox="0 0 32 32" className="size-[32px]" fill="none" stroke="currentColor" strokeWidth="2"><path d="M3 2V29H30M9 14H12V25H9ZM17 9H20V25H17ZM25 5H28V25H25Z" /></svg>
      <svg viewBox="0 0 32 32" className="size-[32px]" fill="none" stroke="currentColor" strokeWidth="2"><path d="M15 30L3 23V10L16 3L28 9V12M3 10L15 16V30M15 16L28 9M9 6L22 12V16M18 29L20 23L29 14L32 17L23 27Z" /></svg>
    </div>
    <div className="mr-10 ml-[40px] h-[156px] border-b-2 border-[#7c7e7c] pt-[50px] font-semibold"><span className="block w-[177px] text-right leading-[40px] whitespace-nowrap">Other outputs</span></div>
    <div className="h-[109px] pt-[44px] pl-[159px] leading-[44px]">azureml-logs</div>
    {files.map((f, i) => (
      <div key={f} className={`mr-10 ml-[42px] flex h-[88px] items-center overflow-hidden border-l-4 whitespace-nowrap ${i === 2 ? "border-[#0a3a8f] bg-[#888b87] tracking-[0.1px]" : i === 0 ? "border-transparent tracking-[-0.35px]" : "border-transparent tracking-[-0.32px]"}`}>
        <span className="w-[86px] shrink-0 pl-[18px]">{i === 2 && <svg viewBox="0 0 30 30" className="size-[32px]"><circle cx="15" cy="15" r="14" fill="#0a3f95" /><path d="M8 15L13 20L22 10" fill="none" stroke="#a9adb5" strokeWidth="3.5" /></svg>}</span>
        <FileText className="mr-[19px] size-[34px] shrink-0" strokeWidth={1.8} />{f}
      </div>
    ))}
  </div>
);

const cols = [
  { n: "MAE", v: "1.188884", w: "w-[152px]" }, { n: "RMSE", v: "1.601623", w: "w-[152px] bg-[#f6faff]" },
  { n: "R2", v: "0.26389", w: "w-[138px]" }, { n: "Explained Variance", v: "0.263998", w: "w-[278px]" },
];
const stats: [string, string][] = [
  ["Median", "1.6016"], ["Min", "1.6016"], ["Max", "1.6016"], ["Standard deviation", "-"], ["Unique values", "1"], ["Missing values", "0"], ["Feature type", "Numeric Feature"],
];
const Help = () => <span className="ml-[9px] inline-flex size-[23px] items-center justify-center rounded-full border-2 border-[#8a8a8a] text-[15px] tracking-normal text-[#777]">?</span>;
const Modal = () => (
  <div className="absolute top-[199px] left-[476px] flex h-[920px] w-[1768px] flex-col rounded-[5px] bg-white pl-12 text-[26.5px] tracking-[-0.1px] text-[#4c4c4d] shadow-[0_44px_110px_rgba(0,0,0,0.32),0_6px_24px_rgba(0,0,0,0.3)]">
    <div className="mt-[56px] flex h-11 items-center justify-between pr-[60px] text-[37.5px] font-semibold tracking-[-0.18px] text-[#1f1f20]">Evaluate Recommender result visualization<X className="-mt-1 size-[40px]" strokeWidth={1.2} /></div>
    <div className="mt-[44px] flex text-[22.8px] tracking-[-0.4px]">
      <div className="w-[148px]"><div className="flex h-9 items-center">Rows<Help /></div><div className="mt-1.5 flex h-9 items-center text-[26px]">1</div></div>
      <div><div className="flex h-9 items-center">Columns<Help /></div><div className="mt-1.5 flex h-9 items-center text-[26px]">4</div></div>
    </div>
    <div className="mt-[30px] flex h-[456px]">
      <div className="flex h-[238px] w-[720px]">
        {cols.map((c) => (
          <div key={c.n} className={c.w}>
            <div className="flex h-[68px] items-center border-y-2 border-[#dededf] pb-[2px] pl-[20px] text-[26px] font-semibold tracking-[-0.1px] whitespace-nowrap">{c.n}</div>
            <div className="h-[122px] pt-[21px] pl-[65px]"><div className="h-[86px] w-2 bg-[#0f62de]" /></div>
            <div className="flex h-12 items-center pl-[20px] text-[26px]">{c.v}</div>
          </div>
        ))}
      </div>
      <div className="ml-[204px] w-[712px] overflow-hidden border-l-2 border-[#dedede] pl-[52px]">
        <div className="-mt-px">
          {stats.map(([a, b]) => <div key={a} className="flex h-11 items-center"><span className="w-[353px]">{a}</span>{b}</div>)}
        </div>
        <div className="mt-[46px] flex h-11 items-center font-semibold tracking-[-0.15px] text-[#2c2c2d]">Visualizations</div>
        <i className="mt-[53px] ml-[147px] block h-1.5 w-1.5 rounded-tl-full bg-[#777]" />
      </div>
      <div className="flex w-[34px] flex-col items-center justify-between bg-[#f7f3f7] py-[13px]">
        <svg viewBox="0 0 14 10" className="h-2.5 w-3.5"><path d="M7 0L14 10H0Z" fill="#4a4a4a" /></svg>
        <div className="mb-[134px] h-[138px] w-[26px] bg-[#c4c1c5]" />
        <svg viewBox="0 0 14 10" className="h-2.5 w-3.5"><path d="M0 0H14L7 10Z" fill="#4a4a4a" /></svg>
      </div>
    </div>
    <div className="mt-[101px] mr-12 flex h-[63px] w-[160px] items-center justify-center self-end rounded-[4px] border-2 border-[#8f8f90] text-[26px] font-semibold tracking-[-0.3px] text-[#2b2b2c]">Close</div>
    <svg viewBox="0 0 26 40" className="absolute top-[602px] left-[1596px] h-10 w-[26px] drop-shadow-[3px_3px_2px_rgba(0,0,0,0.35)]"><path d="M1.5 1.5V33L9 26L14 38L19 36L14 24.5H24.5Z" fill="#fff" stroke="#222" strokeWidth="2" /></svg>
  </div>
);

const Azure = () => (
  <div className="relative flex h-[1317px] shrink-0 flex-col overflow-hidden bg-[#9b999b]">
    <div className="flex h-20 shrink-0 items-center bg-[#084b7b] pt-[3px] pr-[16px] pl-[32px] text-[27px] font-semibold tracking-[-0.32px] text-[#a3a9ae]">
      Microsoft Azure Machine Learning
      <Settings className="ml-auto size-[34px]" strokeWidth={1.8} />
      <svg viewBox="0 0 34 34" className="ml-[45px] size-[34px]" fill="none" stroke="currentColor" strokeWidth="2.2"><path d="M26 15V2H3V30H17M8 9H10M13 9H22M8 15H10M13 15H22M8 21H10M13 21H17M19 19H32L27 25V32L24 30V25Z" /></svg>
      <span className="ml-[54px] font-['Noto_Sans'] text-[40px] font-light">?</span>
      <Smile className="ml-[53px] size-[38px]" strokeWidth={1.6} />
      <span className="ml-[37px] flex size-12 items-center justify-center rounded-full bg-[#3b3f8b] text-[20px] text-[#111]">07</span>
    </div>
    <div className="flex min-h-0 flex-1">
      <Rail />
      <div className="flex min-w-0 flex-1 flex-col">
        <div className="flex h-[68px] shrink-0 items-center border-b-2 border-[#888a88] pl-[48px] text-[27px] tracking-[-0.2px] text-[#27509a]">
          <span className="w-[290px] tracking-[-0.05px]">quick-starts-ws-72301</span><ChevronRight className="mr-[16px] size-[36px] text-[#666]" strokeWidth={1.6} />
          <span className="w-[247px]">Designer (preview)</span><ChevronRight className="mr-[15px] size-[36px] text-[#666]" strokeWidth={1.6} /><span className="text-[#1c1c1d]">Authoring</span>
        </div>
        <div className="flex min-h-0 flex-1">
          <ModulePanel />
          <div className="flex min-w-0 flex-1 flex-col">
            <div className="flex h-[114px] shrink-0 items-center border-b-2 border-[#888a88] text-[26.5px] font-semibold tracking-[-0.4px] text-[#1c1c1d]">
              <span className="ml-[48px] text-[32.5px] tracking-[-0.65px] whitespace-nowrap">Pipeline-Created-on-08-10-2020</span>
              <Settings className="ml-[44px] size-[38px]" strokeWidth={1.6} />
              <span className="ml-auto flex h-16 w-[174px] items-center justify-center rounded-[3px] bg-[#063a90] text-[#aab0bb]">Submit</span>
              <span className="ml-[10px] flex h-16 w-[454px] shrink-0 items-center rounded-[3px] border-2 border-[#5c5e5c] pl-[42px] tracking-[-0.25px] whitespace-nowrap">Create inference pipeline<ChevronDown className="ml-[10px] size-[46px]" strokeWidth={1.2} /></span>
              <span className="ml-[10px] flex h-16 w-[176px] items-center justify-center rounded-[3px] border-2 border-[#5c5e5c]">Publish</span>
              <span className="mr-[42px] ml-[47px] text-[30px] tracking-[6px]">···</span>
            </div>
            <div className="flex h-[74px] shrink-0 items-center border-b-2 border-[#888a88] pl-[1528px] text-[26px] tracking-[-0.1px] whitespace-nowrap text-[#252526]">
              Run finished<span className="ml-[17px] text-[26px] text-[#27509a]">View run overview</span>
            </div>
            <div className="flex min-h-0 flex-1"><Canvas /><RightPanel /></div>
          </div>
        </div>
      </div>
    </div>
    <Modal />
  </div>
);

const Taskbar = () => (
  <div className="flex h-20 shrink-0 items-center bg-black text-[#e6e6e6]">
    <FaWindows className="ml-[31px] size-[33px] text-white" />
    <Search className="ml-[62px] size-[36px] -scale-x-100" strokeWidth={1.8} />
    <svg viewBox="0 0 40 30" className="ml-[58px] h-[30px] w-10" fill="none" stroke="currentColor" strokeWidth="2.4"><path d="M9 1.5H31V28.5H9ZM5 4H1.5V26H5M35 4H38.5V26H35" /></svg>
    <svg viewBox="0 0 46 46" className="ml-[59px] size-[46px]"><path d="M23 7A16 16 0 1 0 38 30H29C26 35 17 34 16 26H39C40 14 33 7 23 7ZM16 20C17 12 29 12 30 20Z" fill="#5cc4f2" /><path d="M6 43C-2 36 14 10 32 4C42 1 44 6 40 13C42 6 38 5 30 9C16 17 4 34 6 43Z" fill="#f3c63a" /></svg>
    <svg viewBox="0 0 44 36" className="ml-[52px] h-9 w-11"><path d="M1 2H16L19 6H43V35H1Z" fill="#f7d36c" /><path d="M1 10H43V35H1Z" fill="#fce8a0" /><path d="M9 35V22H35V35H28V29H16V35Z" fill="#3fb3ea" /></svg>
    <div className="ml-[29px] flex h-20 w-24 items-center justify-center border-b-4 border-[#6cb7f2] bg-[#333435] pt-1"><Chrome className="size-[45px]" /></div>
    <svg viewBox="0 0 34 30" className="ml-auto h-[30px] w-[34px]" fill="none" stroke="currentColor" strokeWidth="2.4"><path d="M10 5H32V22H8V14M20 22V28M12 28H27M2 3H9V11H2ZM5 11V28H9" /></svg>
    <svg viewBox="0 0 34 32" className="ml-[14px] h-8 w-[34px]"><path d="M2 11H7L14 3V27L7 20H2Z" fill="none" stroke="#e6e6e6" strokeWidth="2.2" /><circle cx="25" cy="23" r="9" fill="#e03c3c" /><path d="M21 19L29 27M29 19L21 27" stroke="#fff" strokeWidth="2.5" /></svg>
    <div className="mr-[8px] ml-[20px] h-20 w-[213px] border-r-2 border-[#555] pt-[2px] text-[22.5px] leading-[37px] tracking-[-0.7px]"><div className="pl-[3px]">12:54 PM</div><div>8/10/2020</div></div>
  </div>
);

const Content = () => (
  <div className="relative flex min-w-0 flex-1 flex-col bg-[#191a1c]">
    <div className="relative flex h-[114px] shrink-0 items-center border-b-2 border-[#857763] bg-[#181f27] pt-[16px] pr-[94px] pl-[44px] font-['Open_Sans']">
      <svg viewBox="0 0 36 28" className="h-7 w-9" stroke="#3bcdfa" strokeWidth="4"><path d="M0 2H36M0 14H36M0 26H36" /></svg>
      <span className="ml-[886px] flex h-[42px] w-[512px] items-center justify-center bg-[#04237f] text-[32px] whitespace-nowrap text-[#e3e4e6]">Lab: Train a Simple Recommender</span>
      <span className="ml-auto text-[25.5px] font-semibold tracking-[3.25px] text-[#3bcdfa]">SEND FEEDBACK</span>
    </div>
    <div className="h-[10px] shrink-0" />
    <div className="flex flex-col font-['Open_Sans']">
      <RemoteTabs /><RemoteBar /><Azure /><Taskbar />
    </div>
    <div className="absolute top-[518px] left-[2664px] flex h-[468px] w-[53px] flex-col items-center rounded-[5px] bg-[#2c6399] font-['Open_Sans'] shadow-[0_0_6px_rgba(0,0,0,0.5)]">
      <ChevronsLeft className="mt-[11px] -ml-px size-[44px] text-[#e6e6e4]" strokeWidth={2.4} />
      <span className="mt-[6px] -ml-[5px] text-[24px] leading-[48px] font-extrabold tracking-[0.4px] whitespace-nowrap text-[#e6e6e4] [writing-mode:vertical-rl]">TRAIN A SIMPLE RECOMMENDER</span>
    </div>
    <div className="absolute top-[1548px] left-[2560px] flex size-[120px] items-center justify-center rounded-full bg-[#1b86b8] shadow-[0_2px_14px_rgba(0,0,0,0.4)]">
      <svg viewBox="0 0 56 64" className="h-16 w-14"><path d="M8 0H48Q56 0 56 8V64L44 57H8Q0 57 0 49V8Q0 0 8 0Z" fill="#e9e8e4" /><path d="M9 41C19 50 37 50 47 41" fill="none" stroke="#1b86b8" strokeWidth="3.5" strokeLinecap="round" /></svg>
    </div>
  </div>
);

/* ---------- dock ---------- */
const Disc = ({ className, children }: { className: string; children?: React.ReactNode }) => (
  <span className={`flex size-[86px] items-center justify-center rounded-full ${className}`}>{children}</span>
);
const petals = ["#f7941d", "#e6d31d", "#9fcf3f", "#5bbf8e", "#5aa0d8", "#9a7bc4", "#e07ab0", "#e8434a"];
const dock: { el: React.ReactNode; on?: boolean; badge?: string }[] = [
  { on: true, el: <svg viewBox="0 0 80 76" className="h-[76px] w-20"><defs><linearGradient id="fnd" x1="0" x2="0" y1="0" y2="1"><stop offset="0" stopColor="#2fcdf8" /><stop offset="1" stopColor="#2574ee" /></linearGradient></defs><rect x="1" width="79" height="76" rx="2" fill="#eef3f8" /><path d="M2 0H42C35 14 34 30 34 44H46C46 56 47 66 48 76H2Q0 76 0 74V2Q0 0 2 0Z" fill="url(#fnd)" /><path d="M42 0C35 14 34 30 34 44H46C46 56 47 66 48 76" fill="none" stroke="#25455f" strokeWidth="1.5" /><path d="M22 20V28M58 20V28M16 50C28 62 52 62 64 50" fill="none" stroke="#16202c" strokeWidth="3" strokeLinecap="round" /></svg> },
  { el: <Siri className="size-[88px]" /> },
  { el: <Disc className="border-[3px] border-[#c3ced4] bg-gradient-to-b from-[#c3d3da] to-[#777]"><svg viewBox="0 0 60 60" className="size-[60px]"><path d="M56 2C40 4 28 14 22 28L8 34L18 36L28 46L32 56L38 40C50 30 56 18 56 2Z" fill="#45484b" /><path d="M16 42L8 56L22 48Z" fill="#45484b" /><circle cx="40" cy="18" r="5" fill="#b4bec4" /></svg></Disc> },
  { on: true, el: <Safari className="size-[88px]" /> },
  { el: <svg viewBox="0 0 80 92" className="h-[92px] w-20"><defs><linearGradient id="sky" x1="0" x2="0" y1="0" y2="1"><stop offset="0" stopColor="#2f7fd4" /><stop offset="1" stopColor="#8cc0ee" /></linearGradient></defs><g transform="rotate(-7 40 46)"><rect x="8" y="4" width="63" height="84" fill="#f4f4f4" stroke="#f4f4f4" strokeWidth="4" strokeDasharray="3 2" /><rect x="13" y="9" width="53" height="74" fill="url(#sky)" /><path d="M20 16C28 14 31 26 34 38C42 44 50 50 60 64C54 66 50 62 46 60L40 66L34 60L26 56C34 50 24 36 20 16Z" fill="#69513a" /><path d="M22 18C28 26 30 32 34 40L30 38Z" fill="#cbb89a" /><path d="M28 54L38 52L42 60L36 62Z" fill="#b88a4e" /><circle cx="58" cy="72" r="11" fill="none" stroke="#4d7199" strokeWidth="1.5" /></g></svg> },
  { el: <svg viewBox="0 0 80 92" className="h-[92px] w-20"><path d="M62 10L68 12L72 32L64 34Z" fill="#dcdcdc" /><path d="M64 30L71 29L74 46L66 48Z" fill="#3fb6e0" /><path d="M66 48L74 46L76 62L68 62Z" fill="#43c06a" /><path d="M68 62L76 62L78 76L70 78Z" fill="#f0921e" /><path d="M2 10L58 1L70 82L12 92Z" fill="#a6773c" /><path d="M2 10L8 9L18 91L12 92Z" fill="#8d6331" /><ellipse cx="38" cy="44" rx="20" ry="21" fill="none" stroke="#84592a" strokeWidth="2" /><circle cx="38" cy="38" r="7" fill="#84592a" /><path d="M25 56C28 46 48 46 52 54C46 64 32 64 25 56Z" fill="#84592a" /></svg> },
  { el: <div className="h-[84px] w-[72px] -rotate-6 overflow-hidden rounded-[3px] bg-[#fbfbfb] text-center shadow-[3px_3px_0_#5a646e,-2px_3px_0_#5a646e]"><div className="h-[28px] bg-[#e0383c] text-[20px] leading-[28px] text-white">AUG</div><div className="text-[46px] leading-[54px] tracking-[-1px] text-[#222]">10</div></div> },
  { el: <div className="flex h-[88px] w-[68px] -rotate-4 flex-col gap-[6px] rounded-[2px] border-t-[20px] border-[#fcc92c] bg-[#fbfbf8] pt-[8px]">{[0, 1, 2, 3, 4, 5, 6, 7].map((i) => <i key={i} className="h-px bg-[#b8b8b8]" />)}</div> },
  { el: <div className="flex h-[84px] w-[64px] -rotate-4 flex-col justify-center gap-[6px] rounded-[8px] bg-[#fafafa] pl-[7px] shadow-[2px_4px_0_#26282c]">{["bg-[#3f7df0]", "bg-[#ef5148]", "bg-[#f0983a]", "bg-[#55575a]"].map((c) => <span key={c} className="flex items-center gap-1.5"><i className={`size-3 rounded-full ${c}`} /><i className="h-0.5 w-[34px] bg-[#9a9a9a]" /></span>)}</div> },
  { el: <svg viewBox="0 0 92 88" className="h-[88px] w-[92px]"><path d="M4 14L74 2L82 72L12 84Z" fill="#f2efe6" /><path d="M6 30L80 62L82 72L70 74L7 44Z" fill="#f5c142" /><path d="M44 7L74 2L77 28C60 28 48 20 44 7Z" fill="#8fd873" /><path d="M34 9L44 7C48 30 60 44 80 50V60C52 50 38 30 34 9Z" fill="#a6dd86" /><path d="M20 11L28 10L34 60H24Z" fill="#2c7fe0" /><path d="M7 44L20 50L24 82L12 84Z" fill="#f4b6c5" /><circle cx="29" cy="52" r="12" fill="#1f80e8" /><path d="M29 43L35 59L29 55L23 59Z" fill="#fff" /><circle cx="70" cy="60" r="20" fill="#f1f3f5" stroke="#c9ccd0" /><circle cx="70" cy="60" r="12" fill="none" stroke="#49789c" strokeWidth="2" /><path d="M70 40L73 46H67Z" fill="#e23" /><text x="70" y="65" textAnchor="middle" fontSize="13" fill="#333">3D</text></svg> },
  { el: <Disc className="bg-[#efefef]"><svg viewBox="-40 -40 80 80" className="size-[82px]">{petals.map((c, i) => <ellipse key={c} cx="0" cy="-20" rx="11" ry="17" fill={c} opacity=".85" transform={`rotate(${i * 45})`} />)}</svg></Disc> },
  { el: <svg viewBox="0 0 88 84" className="mt-2 h-[84px] w-[88px]"><defs><linearGradient id="msg" x1="0" x2="0" y1="0" y2="1"><stop offset="0" stopColor="#5dbcfb" /><stop offset="1" stopColor="#1f80f5" /></linearGradient></defs><path d="M43 2C68 2 86 17 86 38S68 74 43 74C36 74 30 73 26 71C24 76 20 79 16 79C20 75 20 71 19 67C8 61 1 51 1 38C1 17 18 2 43 2Z" fill="url(#msg)" /><path d="M58 36C73 36 84 45 84 57C84 64 80 70 74 74L77 81L68 77C44 82 33 69 33 57C33 45 44 36 58 36Z" fill="#edf5fb" /><circle cx="46" cy="57" r="4" fill="#1f5fa0" /><circle cx="58" cy="57" r="4" fill="#1f5fa0" /><circle cx="70" cy="57" r="4" fill="#1f5fa0" /></svg> },
  { el: <svg viewBox="0 0 88 80" className="mt-1 h-20 w-[88px]"><defs><linearGradient id="ft" x1="0" x2="0" y1="0" y2="1"><stop offset="0" stopColor="#4be87c" /><stop offset="1" stopColor="#21c23c" /></linearGradient></defs><rect x="1" y="2" width="78" height="68" rx="12" fill="url(#ft)" /><rect x="14" y="19" width="36" height="34" rx="8" fill="#f2f4f2" /><path d="M53 32L68 20V52L53 42Z" fill="#f2f4f2" /><circle cx="66" cy="54" r="21" fill="#f1f4f1" /><path d="M57 41C53 48 58 66 72 67L76 61L70 57L67 60C62 57 60 52 61 49L64 47L61 40Z" fill="#22c03e" /></svg> },
  { el: <svg viewBox="0 0 84 92" className="h-[92px] w-[84px]"><path d="M4 12L70 2L80 82L16 92Z" fill="#fafafa" /><path d="M4 12L70 2L73 17L6 27Z" fill="#f58a1f" /><text x="10" y="22" fontSize="12" fill="#fff" transform="rotate(-8 10 22)">PAGES</text><path d="M14 32L40 28L43 50L17 54Z" fill="#2f86dd" /><path d="M22 36L28 34L34 36L30 48H26Z" fill="#f0931f" /><path d="M46 29L66 26M47 34L66 31M48 40L66 37M49 45L66 42M19 60L60 54M20 65L60 60M21 71L58 66M22 77L58 72M22 83L58 78" stroke="#aaa" strokeWidth="2" /><path d="M72 2L80 4L60 76L52 90L52 72Z" fill="#e6892a" /><path d="M56 64L62 66L58 80L52 90L52 78Z" fill="#4a4a4a" /></svg> },
  { el: <svg viewBox="0 0 88 84" className="h-[84px] w-[88px]"><path d="M4 46H84L86 82H2Z" fill="#f4f4f5" /><rect x="15" y="42" width="14" height="31" fill="#e23b53" /><rect x="32" y="25" width="14" height="48" fill="#f3862a" /><rect x="49" y="2" width="14" height="71" fill="#35c04c" /><rect x="66" y="16" width="14" height="57" fill="#2f8ff0" /></svg> },
  { el: <svg viewBox="0 0 80 92" className="h-[92px] w-20"><rect x="37" y="34" width="5" height="50" fill="#c3ccd3" /><ellipse cx="40" cy="84" rx="18" ry="7" fill="#c5d3df" /><path d="M8 4H72L79 38H1Z" fill="#36b5f5" /><path d="M1 36H79V41H1Z" fill="#1584c4" /><path d="M17 10H63L66 32H14Z" fill="#f6f8fa" /><circle cx="30" cy="22" r="8" fill="#f04e6a" /><path d="M30 22V14A8 8 0 0 0 22 22ZM30 22L36 27A8 8 0 0 1 24 27Z" fill="#3fbf5e" /><path d="M44 16H58M44 21H58M44 26H58" stroke="#889" strokeWidth="1.5" /></svg> },
  { badge: "1", el: <Disc className="bg-gradient-to-b from-[#24bdfb] to-[#1b58ea]"><svg viewBox="0 0 60 60" className="size-[62px]" stroke="#f3f7fb" strokeWidth="6.5" strokeLinecap="round"><path d="M34 6L14 42M10 52L8 54M26 6L50 50M4 40H34M46 40H56" /></svg></Disc> },
  { el: <div className="flex size-[82px] items-center justify-center rounded-[5px] border-2 border-[#a9b0b5] bg-gradient-to-b from-[#cfdae0] to-[#7d7d7e]"><svg viewBox="-36 -36 72 72" className="size-[74px]"><circle r="34" fill="#3a3a3b" /><circle r="27" fill="none" stroke="#a4a5a6" strokeWidth="6" strokeDasharray="3.6 3.47" /><circle r="22" fill="none" stroke="#a4a5a6" strokeWidth="5" /><path d="M0 0H22M0 0L-11 -19M0 0L-11 19" stroke="#a4a5a6" strokeWidth="5" /><circle r="5" fill="#a4a5a6" /></svg></div> },
  { el: <div className="h-[76px] w-[84px] rounded-[4px] border-[3px] border-[#8d9196] bg-[#262628] pt-2 pl-2 font-['Liberation_Mono'] text-[22px] leading-5 font-bold text-white">&gt;_</div> },
  { el: <Disc className="border-[3px] border-[#8a2cb4] bg-gradient-to-b from-[#d06ef6] to-[#7d32bd]"><svg viewBox="-30 -30 60 60" className="size-[64px]" fill="none" stroke="#f4e8fa" strokeWidth="4"><path d="M-14 20A25 25 0 1 1 14 20M-10 10A15 15 0 1 1 10 10" /><circle r="5.5" fill="#f4e8fa" stroke="none" cy="-2" /><path d="M0 10V26" strokeWidth="10" strokeLinecap="round" /></svg></Disc> },
  { el: <Disc className="border-[3px] border-[#2c2c2c] bg-[#070707] text-[31px] text-[#f2f2f2]"><FaApple className="size-[28px]" />tv</Disc> },
];
const apps: typeof dock = [
  { on: true, el: <Chrome className="size-[87px]" /> },
  { on: true, badge: "138", el: <Disc className="bg-[#f8f8f8]"><SlackMark className="size-[56px]" /></Disc> },
  { on: true, el: <span className="flex size-[92px] items-center justify-center rounded-full bg-[#f3f0f6]"><FaGithub className="size-[86px] text-[#6d3490]" /></span> },
];
const DockCell = ({ el, on, badge }: (typeof dock)[number]) => (
  <div className="relative flex h-[130px] w-[106.2px] shrink-0 items-center justify-center pb-[11px]">
    {el}
    {badge && <span className={`absolute top-[10px] flex h-[38px] items-center justify-center rounded-full bg-[#f0423f] text-white ${badge.length > 1 ? "right-[0px] w-[43px] text-[20px]" : "right-[1px] w-[38px] text-[24px]"}`}>{badge}</span>}
    {on && <i className="absolute bottom-[4px] size-2 rounded-full bg-[#9aa3b3]" />}
  </div>
);
const Thumb = ({ kind }: { kind: number }) => (
  <div className="relative h-[130px] w-[106.2px] shrink-0 pt-[31px] pl-[6px]">
    <div className={`h-[56px] w-[92px] overflow-hidden border-t-4 px-1.5 pt-1 ${kind === 1 ? "border-[#0c0c0c] bg-[#393b40]" : kind === 0 ? "border-[#3b3f3b] bg-[#0b100c]" : "border-[#0a0a0a] bg-[#191c1f]"}`}>
      {kind === 1
        ? <div className="flex flex-col items-center gap-1 pt-2.5"><i className="size-2 rounded-full bg-white" /><i className="h-px w-5 bg-[#888]" /><i className="h-px w-7 bg-[#666]" /><i className="h-0.5 w-7 bg-[#565a60]" /></div>
        : ["w-5", "w-9", "w-8", "w-7", "w-9", "w-10", "w-6", "w-9", "w-8"].map((w, i) => <i key={i} className={`mb-1 block h-px ${w} ${kind === 0 && i % 3 === 0 ? "bg-[#2f8a3a]" : kind === 3 ? "ml-5 bg-[#55606c]" : "bg-[#4b514d]"}`} />)}
    </div>
    <span className="absolute top-[72px] right-[6px] size-8">
      {kind === 0 ? <Safari className="size-8" /> : kind === 3 ? <span className="flex size-8 items-center justify-center rounded-full bg-white"><SlackMark className="size-5" /></span> : <Chrome className="size-8" />}
    </span>
  </div>
);
const Dock = () => (
  <div className="mt-9 ml-[87px] flex h-[140px] w-[3187px] rounded-t-[10px] border-2 border-[#3b4253] bg-gradient-to-r from-[#161c2a] to-[#15202f] pl-[4px]">
    {dock.map((d, i) => <DockCell key={i} {...d} />)}
    <i className="mt-[16px] ml-[22px] h-[94px] w-0.5 bg-[#59616f]" />
    <div className="ml-[22px] flex">{apps.map((d, i) => <DockCell key={i} {...d} />)}</div>
    <i className="mt-[16px] ml-[22px] h-[94px] w-0.5 bg-[#59616f]" />
    <div className="ml-[23px] flex">{[0, 1, 2, 3].map((k) => <Thumb key={k} kind={k} />)}</div>
    <svg viewBox="0 0 72 90" className="mt-[15px] ml-[17px] h-[90px] w-[72px]"><path d="M1 10L10 82C16 90 56 90 62 82L71 10Z" fill="#5f666b" /><path d="M12 70L10 82C16 90 56 90 62 82L60 70C54 78 20 78 12 70Z" fill="#8b9094" /><ellipse cx="36" cy="10" rx="35" ry="8" fill="#454b50" stroke="#9aa0a5" strokeWidth="2" /></svg>
  </div>
);

export default function App() {
  return (
    <div className="flex h-[2100px] w-[3360px] flex-col overflow-hidden bg-gradient-to-r from-[#040a14] via-[#040a13] to-[#0a1f36] font-['Inter',sans-serif]">
      <MenuBar />
      <div className="h-6 shrink-0 bg-gradient-to-r from-[#26426f] via-[#12315a] to-[#021a40]" />
      <div className="relative flex h-[1866px] shrink-0 flex-col overflow-hidden rounded-[10px] bg-black">
        <TabStrip />
        <Toolbar />
        <div className="flex min-h-0 flex-1"><Sidebar /><Content /></div>
        <div className="pointer-events-none absolute inset-0 rounded-[10px] border-2 border-[#6f7478]/80" />
      </div>
      <Dock />
    </div>
  );
}
